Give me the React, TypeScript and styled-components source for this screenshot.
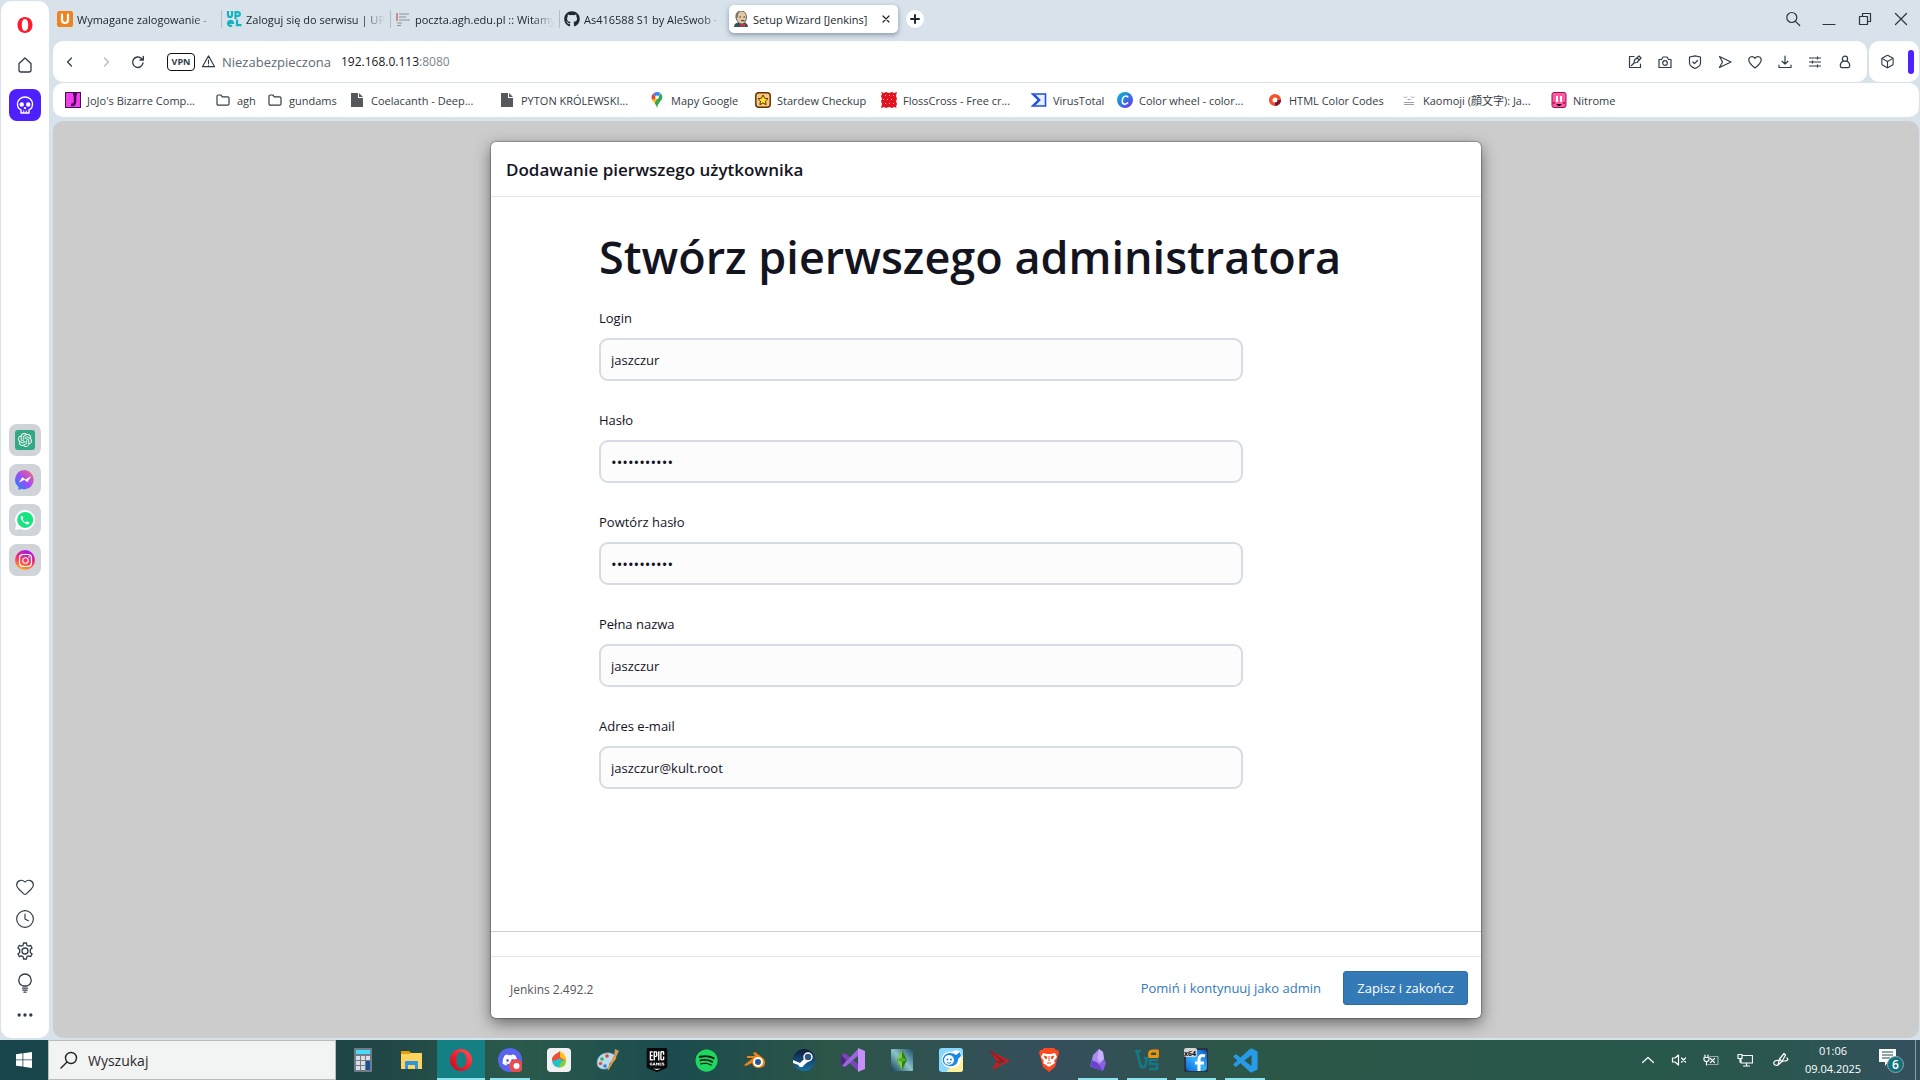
import React from "react";
import styled, { createGlobalStyle, css } from "styled-components";
import { Box, Clock4, Ellipsis, Heart } from "lucide-react";
import { FaGithub, FaDiscord, FaSpotify, FaInstagram } from "react-icons/fa";
import { SiEpicgames, SiOpenai } from "react-icons/si";
import { BiLogoVisualStudio } from "react-icons/bi";

const ui = `"Open Sans", "Noto Sans", "Noto Sans CJK JP", sans-serif`;

const Global = createGlobalStyle`
  *, *::before, *::after { box-sizing: border-box; }
  body { margin: 0; background: #d7e2eb; font-family: ${ui}; color: #14141f; }
  button, input { font: inherit; color: inherit; }
  button { border: 0; padding: 0; background: none; cursor: pointer; }
  svg { display: block; flex: none; }
`;

const Screen = styled.div`
  height: 100vh;
  min-height: 900px;
  display: grid;
  grid-template-rows: 1fr 40px;
`;

const Browser = styled.div`
  display: grid;
  grid-template-columns: 48px 1fr;
  gap: 4px;
  padding: 0 1px 2px 1px;
  min-height: 0;
`;

/* ---------- sidebar ---------- */

const Sidebar = styled.nav`
  background: #fff;
  border-radius: 10px;
  margin-top: 1px;
  padding: 8px 0 7px;
  display: flex;
  flex-direction: column;
  justify-content: space-between;
  align-items: center;
  color: #303c48;
`;

const SideGroup = styled.div<{ $gap: number }>`
  display: flex;
  flex-direction: column;
  align-items: center;
  gap: ${(p) => p.$gap}px;
`;

const SideButton = styled.button<{ $bg?: string }>`
  width: 32px;
  height: 32px;
  border-radius: 8px;
  display: grid;
  place-items: center;
  background: ${(p) => p.$bg || "transparent"};
`;

const SideMiddle = styled(SideGroup)`
  flex: 1;
  justify-content: center;
  padding-top: 8px;
`;

/* ---------- browser chrome ---------- */

const Main = styled.div`
  display: flex;
  flex-direction: column;
  min-width: 0;
`;

const TabStrip = styled.div`
  height: 41px;
  display: flex;
  align-items: center;
  padding-bottom: 3px;
  font-size: 11px;
  color: #20272e;
`;

const Tab = styled.button<{ $active?: boolean }>`
  width: 169px;
  height: 28px;
  display: flex;
  align-items: center;
  gap: 4px;
  padding: 0 6px 0 4px;
  text-align: left;
  ${(p) =>
    p.$active
      ? css`
          background: #fff;
          border-radius: 5px;
          box-shadow: 0 2px 5px rgba(60, 80, 100, 0.5);
        `
      : css`
          &:not(:nth-child(4)) {
            background: linear-gradient(#b3bdc6, #b3bdc6) right center / 1px 18px no-repeat;
          }
        `}
`;

const TabTitle = styled.span<{ $fade?: boolean }>`
  flex: 1;
  overflow: hidden;
  white-space: nowrap;
  ${(p) => p.$fade && "mask-image: linear-gradient(90deg, #000 84%, transparent);"}
`;

const NewTab = styled.button`
  width: 18px;
  height: 18px;
  margin-left: 8px;
  border-radius: 50%;
  background: #fff;
  display: grid;
  place-items: center;
`;

const WindowControls = styled.div`
  margin-left: auto;
  display: flex;
  color: #2b343d;
`;

const WinButton = styled.button`
  width: 36px;
  height: 28px;
  display: grid;
  place-items: center;
`;

const ToolbarRow = styled.div`
  display: grid;
  grid-template-columns: 1fr 50px;
  gap: 2px;
  height: 41px;
`;

const Panel = styled.div`
  background: #fff;
  border-radius: 10px;
  display: flex;
  align-items: center;
  color: #303c48;
`;

const Address = styled(Panel)`
  padding: 0 7px 0 0;
`;

const NavButton = styled.button<{ $w: number; $dim?: boolean }>`
  width: ${(p) => p.$w}px;
  height: 32px;
  display: grid;
  place-items: center;
  color: ${(p) => (p.$dim ? "#b5bac0" : "#303c48")};
`;

const Vpn = styled.button`
  width: 28px;
  height: 18px;
  margin: 0 6px 0 16px;
  border: 1px solid #111;
  border-radius: 4px;
  font-size: 9px;
  font-weight: 700;
  line-height: 16px;
`;

const Insecure = styled.span`
  margin-left: 6px;
  width: 119px;
  font-size: 13px;
  color: #606a74;
`;

const UrlBox = styled.span`
  flex: 1;
  font-size: 12px;
  color: #16191d;
  span { color: #7b858e; }
`;

const Extensions = styled(Panel)`
  justify-content: space-between;
  padding: 0 5px 0 8px;
`;

const Accent = styled.i`
  width: 6px;
  height: 24px;
  border-radius: 3px;
  background: #4e22ff;
`;

const Bookmarks = styled(Panel)`
  height: 34px;
  margin-top: 1px;
  padding-left: 12px;
  font-size: 11px;
  overflow: hidden;
`;

const Bookmark = styled.a<{ $w: number }>`
  width: ${(p) => p.$w}px;
  flex: none;
  display: flex;
  align-items: center;
  gap: 6px;
  color: #343c44;
  text-decoration: none;
  white-space: nowrap;
`;

/* ---------- page ---------- */

const Page = styled.main`
  flex: 1;
  min-height: 0;
  margin-top: 4px;
  background: #ccc;
  border-radius: 10px;
  padding: 21px 16px 20px;
  display: flex;
  justify-content: center;
  overflow: hidden;
`;

const Dialog = styled.form`
  width: 100%;
  max-width: 990px;
  background: #fff;
  border-radius: 5px;
  box-shadow: 0 0 1px 1px rgba(0, 0, 0, 0.25), 0 5px 16px rgba(0, 0, 0, 0.5);
  display: flex;
  flex-direction: column;
`;

const DialogHeader = styled.header`
  height: 55px;
  border-bottom: 1px solid #e5e5e5;
  padding: 0 15px;
  display: flex;
  align-items: center;
  font-size: 17px;
  font-weight: 600;
`;

const DialogBody = styled.section`
  flex: 1;
  padding: 32px 108px 0;
  border-bottom: 1px solid #ccc;
  margin-bottom: 24px;
`;

const Title = styled.h1`
  margin: 0 0 23px;
  font-size: 45px;
  line-height: 56px;
  font-weight: 600;
  white-space: nowrap;
`;

const Field = styled.div`
  display: flex;
  flex-direction: column;
  gap: 10px;
  max-width: 644px;
  margin-bottom: 29px;
  font-size: 13px;
  line-height: 20px;
`;

const TextInput = styled.input`
  height: 43px;
  border: 2px solid #d6dce6;
  border-radius: 9px;
  background: #fcfcfd;
  padding: 0 10px;
  outline: 0;
  line-height: 20px;
  &[type="password"] { font-size: 15px; }
`;

const DialogFooter = styled.footer`
  height: 62px;
  border-top: 1px solid #e5e5e5;
  padding: 0 13px 0 19px;
  display: flex;
  align-items: center;
  font-size: 13px;
`;

const Version = styled.span`
  flex: 1;
  color: #55585c;
  font-size: 12px;
  padding-top: 4px;
`;

const SkipLink = styled.a`
  color: #337ab7;
  text-decoration: none;
  margin-right: 22px;
`;

const Save = styled.button`
  height: 34px;
  width: 125px;
  border: 1px solid #2e6da4;
  border-radius: 3px;
  background: #337ab7;
  color: #fff;
`;

/* ---------- taskbar ---------- */

const Taskbar = styled.div`
  display: flex;
  align-items: stretch;
  color: #fff;
  background: linear-gradient(90deg, #17454b 0, #204646 20%, #2b5a4b 27%, #1b4b4f 35%, #2c5548 43%, #354e5c 55%, #2c5648 64%, #27574a 85%, #2b5650 93%, #33505e 100%);
`;

const Start = styled.button`
  width: 48px;
  display: grid;
  place-items: center;
`;

const TaskSearch = styled.label`
  width: 288px;
  background: #f2f3f3;
  border: 1px solid #b9bcbc;
  display: flex;
  align-items: center;
  gap: 10px;
  padding-left: 11px;
  color: #222;
  font-size: 14px;
  input {
    border: 0;
    outline: 0;
    background: none;
    width: 200px;
    padding: 0;
  }
  input::placeholder { color: #2b2b2b; opacity: 1; }
`;

const Tasks = styled.div`
  display: flex;
  gap: 1px;
  padding-left: 3px;
  flex: 1;
`;

const Task = styled.button<{ $open?: boolean; $active?: boolean }>`
  width: 48px;
  display: grid;
  place-items: center;
  background: ${(p) => (p.$active ? "#158084" : "transparent")};
  ${(p) =>
    p.$active
      ? "box-shadow: inset 0 -2px #8fe3ee;"
      : p.$open &&
        "background: linear-gradient(#8fe3ee, #8fe3ee) center bottom / 40px 2px no-repeat;"}
`;

const Tray = styled.div`
  display: flex;
  align-items: center;
  border-right: 1px solid #8b9ca2;
  margin-right: 4px;
`;

const TrayButton = styled.button<{ $w: number }>`
  width: ${(p) => p.$w}px;
  height: 40px;
  display: grid;
  place-items: center;
`;

const ClockText = styled.time`
  width: 66px;
  text-align: center;
  font-size: 11px;
  line-height: 18px;
`;

/* ---------- drawings ---------- */

type SvgProps = { s?: number; vb?: string; children: React.ReactNode; w?: number };
const Line = ({ s = 16, vb = "0 0 16 16", w = 1.2, children }: SvgProps) => (
  <svg width={s} height={s} viewBox={vb} fill="none" stroke="currentColor" strokeWidth={w} strokeLinecap="round" strokeLinejoin="round">{children}</svg>
);
const Art = ({ s = 24, vb = "0 0 24 24", children }: SvgProps) => (
  <svg width={s} height={s} viewBox={vb}>{children}</svg>
);

const OperaLogo = () => (
  <Art s={18} vb="0 0 18 18"><path fillRule="evenodd" fill="#ff1b2d" d="M9 1c4.600 0 7.500 3.600 7.500 8S13.600 17 9 17 1.500 13.400 1.500 9 4.400 1 9 1Zm0 2C6.800 3 5.800 6 5.800 9S6.800 15 9 15s3.200-3 3.200-6S11.200 3 9 3Z" /></Art>
);
const HomeIcon = () => <Line s={18} vb="0 0 18 18" w={1.3}><path d="M3 7.500 9 2l6 5.500V14a2 2 0 0 1-2 2H5a2 2 0 0 1-2-2Z" /></Line>;
const Skull = () => (
  <Art s={20} vb="0 0 20 20">
    <path d="M6 14.800C3.500 14 2.500 11.500 2.500 9 2.500 5 5.800 2 10 2s7.500 3 7.500 7c0 2.500-1 5-3.500 5.800V18H6Z" fill="none" stroke="#fff" strokeWidth="1.400" strokeLinejoin="round" />
    <circle cx="6.800" cy="9.500" r="2.200" fill="#fff" /><circle cx="13.200" cy="9.500" r="2.200" fill="#fff" />
    <path d="m10 12 .8 1.500H9.200ZM8.700 15.500V18M11.300 15.500V18" stroke="#fff" fill="#fff" />
  </Art>
);
const Gear = () => (
  <Line s={18} vb="0 0 18 18" w={1.3}>
    <path d="M7.500 1h3l.4 2.300 1.500.9 2.200-.8 1.500 2.600L14.300 7.500v3l1.800 1.500-1.500 2.600-2.200-.8-1.500.9-.4 2.300h-3l-.4-2.300-1.500-.9-2.200.8L1.900 12l1.800-1.500v-3L1.900 6l1.500-2.600 2.200.8 1.500-.9Z" /><circle cx="9" cy="9" r="3" />
  </Line>
);
const Bulb = () => <Line s={20} vb="0 0 20 20" w={1.3}><path d="M8 13C5.500 12 3.800 10 3.800 7.200a6.200 6.200 0 0 1 12.400 0c0 2.800-1.700 4.800-4.200 5.800ZM7.600 15.200h4.800M7.900 17.200h4.200M9 19.200h2" /></Line>;

const Upel = () => (
  <Art s={16} vb="0 0 16 16">
    <g fill="none" stroke="#14b5c0" strokeWidth="2.200"><path d="M2 0v4a2 2 0 0 0 4 0V0M9.500 8V1.200h2.500a1.800 1.800 0 0 1 0 3.800H9.500M2 12h5a2.500 2.500 0 1 0-1 2.400M11 8.500v5.700h4.500" /></g>
  </Art>
);
const Mail = () => (
  <Art s={16} vb="0 0 16 16"><path d="M1 2h2v8H1Z" fill="#d48a8a" /><path d="M4 3h10M4 6h7M4 9h11M2 12h5M2 14.500h4" stroke="#8b9299" strokeWidth="1.200" /></Art>
);
const JenkinsFace = () => (
  <Art s={16} vb="0 0 16 16">
    <path d="M1 16c0-3 2-4 4-4.500h6c2.500.5 4 2 4 4.500Z" fill="#335061" /><path d="M3 5c0-3 2-5 5-5s5.500 2 5.500 6-2 7-5 7S3 9 3 5Z" fill="#e3c6a5" stroke="#444" strokeWidth=".8" />
    <path d="M3 8C2 3 4 0 8 0 5.500 1.500 4.800 3 5 6Z" fill="#7a7672" /><path d="M6.500 6H8M10.500 6H12M8 9.700h3.500" stroke="#222" strokeWidth=".9" /><path d="m7 12.500 2 1 3-1V16l-3-1-2 1Z" fill="#d33833" />
  </Art>
);
const Folder = () => <Line><path d="M2 4.200A1.200 1.200 0 0 1 3.200 3h2.600l1.500 1.800h5.500A1.200 1.200 0 0 1 14 6v6a1.200 1.200 0 0 1-1.200 1.200H3.200A1.200 1.200 0 0 1 2 12Z" /></Line>;
const Doc = () => <Art s={16} vb="0 0 16 16"><path fill="#55585c" d="M2 1h7v5h5v9H2Zm8 0 4 4h-4Z" /></Art>;
const MapPin = () => (
  <Art s={16} vb="0 0 16 16"><path d="M8 0a5.300 5.300 0 0 0-4 1.800L8 6l3.500-4.800A5.300 5.300 0 0 0 8 0Z" fill="#4285f4" /><path d="M4 1.800A5.400 5.400 0 0 0 3.300 8L8 6Z" fill="#ea4335" /><path d="M3.300 8c.7 1.300 1.600 2 2.400 3.300L11 5 8 6Z" fill="#fbbc04" /><path d="M11.500 1.200A5.400 5.400 0 0 1 13 7c-1 2-4 4-5 9-.6-2-1.300-3.500-2.300-4.700Z" fill="#34a853" /><circle cx="8" cy="5.300" r="1.800" fill="#fff" /></Art>
);
const Star = () => <Art s={16} vb="0 0 16 16"><rect x=".8" y=".8" width="14.400" height="14.400" rx="3" fill="#f9c77c" stroke="#63330b" strokeWidth="1.500" /><path d="m8 3 1.600 3.200 3.400.5-2.500 2.400.6 3.600L8 11l-3.100 1.700.6-3.600L3 6.700l3.400-.5Z" fill="#ffe51f" stroke="#63330b" /></Art>;
const Floss = () => <Art s={16} vb="0 0 16 16"><path d="m0 0 3 1 2-1 3 1 3-1 2 1 3-1-1 4 1 3-1 2 1 3-1 3 1 1-3-1-2 1-3-1-3 1-2-1-3 1 1-4-1-3 1-2-1-3 1-2Z" fill="#e01320" /><g fill="#ffb3b3"><path d="M4 3h1v1H4zM8 3h1v1H8zM12 3h1v1h-1zM2 7h1v1H2zM6 7h1v1H6zM10 7h1v1h-1zM4 11h1v1H4zM8 11h1v1H8zM12 11h1v1h-1z" /></g></Art>;
const Virus = () => <Art s={16} vb="0 0 16 16"><path d="M1.500 2h13v12h-13l6-6Z" fill="#eaf0ff" stroke="#1c4fe0" strokeWidth="1.600" /><path d="m4 3 5 5-5 5" fill="none" stroke="#1c4fe0" strokeWidth="1.200" /></Art>;
const Canva = () => (
  <Art s={16} vb="0 0 16 16"><defs><linearGradient id="cv" x1="0" y1="0" x2="1" y2="1"><stop stopColor="#00c4cc" /><stop offset=".5" stopColor="#2f79e4" /><stop offset="1" stopColor="#7d2ae8" /></linearGradient></defs><circle cx="8" cy="8" r="8" fill="url(#cv)" /><path d="M11 5.500C10.500 3 6 3.500 5.300 8s3 5.500 5.700 2.500" fill="none" stroke="#fff" strokeWidth="1.500" /></Art>
);
const HtmlCodes = () => <Art s={16} vb="0 0 16 16"><circle cx="8" cy="8" r="4.300" fill="none" stroke="#f4522a" strokeWidth="3.600" /><path d="M12.300 8A4.300 4.300 0 0 1 8 12.300" fill="none" stroke="#7d1636" strokeWidth="3.600" /></Art>;
const Kao = () => <Art s={16} vb="0 0 16 16"><path d="M3 4.500 4.500 6M6 4.500 4.500 6M10 4.500 11.500 6M13 4.500 11.500 6M6.500 7.500h3M3 10.500h10M3 12.500h10" stroke="#9b9fa3" fill="none" /></Art>;
const Nitro = () => <Art s={16} vb="0 0 16 16"><rect x="1" y=".5" width="14" height="15" rx="2" fill="#ff58a5" stroke="#8f1750" /><path d="M5 4h2v6H5zM9 4h2v6H9z" fill="#fff" /><path d="M5 12h6l-2 2H7Z" fill="#220014" /><path d="M2 10h2v2H2zM12 10h2v2h-2z" fill="#d8133f" /></Art>;

const grad = (id: string, a: string, b: string, c = b) => (
  <defs><linearGradient id={id} x1="0" y1="1" x2="1" y2="0"><stop stopColor={a} /><stop offset=".5" stopColor={b} /><stop offset="1" stopColor={c} /></linearGradient></defs>
);
const Badge = styled.span<{ $bg: string; $r?: number; $c?: string; $s?: number }>`
  width: ${(p) => p.$s || 20}px;
  height: ${(p) => p.$s || 20}px;
  display: grid;
  place-items: center;
  flex: none;
  color: ${(p) => p.$c || "#fff"};
  background: ${(p) => p.$bg};
  border-radius: ${(p) => p.$r ?? 10}px;
`;
const Messenger = () => (
  <Art s={20} vb="0 0 20 20">{grad("ms", "#0a8cff", "#a04bf5", "#ff6a6a")}<path d="M10 0a9.700 9.700 0 0 1 0 19.300c-1.200 0-2.300-.2-3.300-.6L3.500 20v-3A9.700 9.700 0 0 1 10 0Z" fill="url(#ms)" /><path d="m4.500 12 3-4.500 3 2.300 5-3-3.200 5-3-2.300Z" fill="#fff" stroke="#fff" strokeLinejoin="round" strokeWidth=".6" /></Art>
);
const WhatsApp = () => (
  <Art s={20} vb="0 0 20 20"><path d="M10 0a10 10 0 1 1-4.500 18.900L0 20l1.200-5.400A10 10 0 0 1 10 0Z" fill="#fff" /><circle cx="10.200" cy="9.900" r="8" fill="#16e481" /><path d="M7 5.500c-1.500.7-1.600 2.200-1 3.500a10 10 0 0 0 5.500 5.200c1.500.5 2.700-.2 3-1.500l-2.600-1.400-1.100 1.200A8 8 0 0 1 7.500 9.200l1-1.100Z" fill="#fff" /></Art>
);

const Calc = () => <Art><rect x="3" width="18" height="24" rx="1" fill="#737b86" /><path d="M5 2h14v4H5Z" fill="#45dcf8" /><g fill="#d9dde4"><path d="M5 8h4v4H5zM10 8h4v4h-4zM15 8h4v4h-4zM5 13h4v4H5zM10 13h4v4h-4zM5 18h4v4H5zM10 18h4v4h-4z" /></g><path d="M15 13h4v9h-4z" fill="#174f9c" /></Art>;
const Explorer = () => <Art><path d="M1 3h8l2 2h10v3H1Z" fill="#e3a008" /><path d="M1 6h8l2-1h11v16H1Z" fill="#ffd35c" /><path d="M5 14q0-1 1-1h11q1 0 1 1v7h-3v-4H8v4H5Z" fill="#3095e0" /></Art>;
const OperaBig = () => <Art>{grad("op", "#b80c1c", "#ff1b2d", "#ff5a5a")}<path fillRule="evenodd" fill="url(#op)" d="M12 1a11 11 0 1 1 0 22 11 11 0 0 1 0-22Zm0 3C8.500 4 7.300 8 7.300 12S8.500 20 12 20s5.500-4 5.500-8S15.500 4 12 4Z" /></Art>;
const Discord = () => <Art><circle cx="12" cy="12" r="12" fill="#5865f2" /><FaDiscord x="4" y="4" size={16} color="#fff" /><circle cx="18" cy="18" r="7" fill="#e64c50" /><circle cx="18.500" cy="18" r="3" fill="#fff" /></Art>;
const Medi = () => <Art><rect width="24" height="24" rx="4" fill="#f1f1f1" /><circle cx="12" cy="12.500" r="7" fill="#22c3c8" /><path d="M5 12c0-5 5-6 8-9 0 3 5 4 6 9-3 3-5-3-8-1s-4 2-6 1Z" fill="#f34b35" /><path d="M12 19.500c5 0 7-3 7-8-3 1-6 3-7 8Z" fill="#8bd02e" /><path d="M13 9V3c4 2 6 5 6 9-2 0-4-1-6-3Z" fill="#ffc41c" /></Art>;
const Paint = () => <Art><path d="M1 15C1 8 7 4 14 5c5 1 7 4 5 7-2 2-4 1-5 3s0 3-2 5-11 2-11-5Z" fill="#b8dcee" stroke="#6999b4" strokeWidth=".6" /><circle cx="6" cy="11" r="1.800" fill="#3fae49" /><circle cx="11" cy="8" r="1.800" fill="#e74135" /><circle cx="4.500" cy="15.500" r="1.800" fill="#e2544c" /><circle cx="9" cy="18" r="1.800" fill="#3678d8" /><path d="m12 22 6-14 2 1Z" fill="#f09b35" stroke="#f09b35" /><path d="m18 8 1-7 4 2-3 6Z" fill="#d39a62" /></Art>;
const Epic = () => <Art><path d="M4 1h16v18l-8 4-8-4Z" fill="#fff" /><SiEpicgames x="0" y="0" size={24} color="#0a0a0a" /></Art>;
const Spotify = () => <Badge $bg="#0b2018" $c="#1ed760" $s={22} $r={11}><FaSpotify size={23} /></Badge>;
const Blender = () => <Art><path d="m1 17 9-7H4V8h8l-2-3 2-1 8 6c4 4 2 10-4 10-4 0-6-2-7-5l-6 3Z" fill="#ef8316" /><circle cx="15" cy="14" r="5" fill="#fff" /><circle cx="15" cy="14" r="3" fill="#265787" /></Art>;
const Steam = () => <Badge $bg="linear-gradient(#121a3c,#1573a8)" $s={22} $r={11}><Art s={22} vb="0 0 22 22"><path d="m0 11 7 3 5-5 4 3-5 4c-1 3-5 3-5.500 0L0 14Z" fill="#fff" /><circle cx="15" cy="8" r="4" fill="#31527c" stroke="#fff" strokeWidth="1.500" /></Art></Badge>;
const VStudio = () => <Art><path d="M0 7 4 5v14l-4-2Z" fill="#52218a" /><path d="M1 6.500 4 5l14 12v7L1 8Z" fill="#7a45b8" /><path d="M18 0v7L4 19l-3-1.500Z" fill="#9a66dc" /><path d="m17 0 7 3v18l-7 3Z" fill="#c490f7" /></Art>;
const Sims = () => <Art>{grad("si", "#123f5e", "#8cc4c8", "#1d4d6e")}<rect x="1" y="1" width="22" height="22" rx="1" fill="url(#si)" /><path d="M12 2 17 12 12 22 7 12Z" fill="#2f7d1e" /><path d="M12 2v20L7 12Z" fill="#7fcf45" /><path d="m7 12 5-3 5 3-5 2Z" fill="#4fae2c" /></Art>;
const Chat = () => (
  <Art><rect width="24" height="24" rx="3" fill="#8bd8ff" /><path d="M24 7v14q0 3-3 3H7Z" fill="#fff09a" />
    <path d="M3 10C4 5 8 3 13 4c2-2 8-2 9 1s0 12-4 14-11 1-13-2-3-4-2-7Z" fill="#fff" />
    <path d="M4 10C6 4 13 4 17 7l4-3 1 4-3 3c0 5-4 8-9 7s-7-4-6-8Z" fill="#1787e8" /><circle cx="10" cy="12" r="5" fill="#fff" /><circle cx="8.500" cy="11.500" r="1" fill="#1787e8" /><circle cx="12" cy="11.500" r="1" fill="#1787e8" /><path d="M8 14.500q2 1.500 4 0" fill="none" stroke="#1787e8" /></Art>
);
const RedArrow = () => <Art><path fillRule="evenodd" d="M2 3 22 13 4 22 9 13Zm6 5 4 5-3 5 9-5Z" fill="#d9161c" /><path d="m2 3 13 10-6 1" fill="none" stroke="#a90f14" strokeWidth="1.300" /></Art>;
const Brave = () => <Art><path d="M7 0h10l2 2h2l1 3-1 3-3 11-6 5-6-5L3 8 2 5l1-3h2Z" fill="#fb4a20" /><path d="m6 5 4 1h4l4-1 2 4-3 4 1 2-3 2-3 2-3-2-3-2 1-2-3-4Z" fill="#fff" /><path d="m7 8 3 1-1 2Zm10 0-3 1 1 2ZM12 8v5m-2 2h4" stroke="#fb4a20" fill="#fb4a20" /></Art>;
const Obsidian = () => <Art><path d="M13 1 17 4 18 11 20 15 17 23 11 21 4 18 7 8Z" fill="#8b62e5" /><path d="M13 1 11 10 14 15 11 21 4 18 6 12 7 7Z" fill="#a98af5" /><path d="M4 18 6 12 12 15 17 23 11 21Z" fill="#6d43cc" /><path d="M13 1 17 4 18 11 14 15 11 10Z" fill="#c7b1ff" /></Art>;
const VBox = () => <Art><path d="M0 3h6M2 3l4 16h4l2-9h-3M23 12h-8v4h7v5h-8" fill="none" stroke="#147887" strokeWidth="2.600" strokeLinejoin="round" /><path d="M14.500 8.500V6q0-3 3-3h5v5.500Z" fill="none" stroke="#ee930c" strokeWidth="2.800" strokeLinejoin="round" /></Art>;
const X64 = () => <Art>{grad("xf", "#0763dd", "#37b5fb", "#0a54c8")}<rect width="24" height="24" rx="1" fill="#2a3440" /><rect x="2" y="2" width="21" height="21" rx="4" fill="url(#xf)" /><path d="M21 8q-6-2-6 4v11m-4-8h9" fill="none" stroke="#fff" strokeWidth="3" /><rect width="13" height="9" rx="2" fill="#d5d5d5" /><text x="0" y="8" fontFamily="Open Sans, sans-serif" fontWeight="700" fontSize="7" fill="#111">x64</text></Art>;

/* ---------- data ---------- */

const tabs = [
  { title: "Wymagane zalogowanie - ", icon: <Badge $s={16} $r={2} $bg="#f08220"><Line w={2.2}><path d="M5 3.500V9a3 3 0 0 0 6 0V3.500" /></Line></Badge> },
  { title: "Zaloguj się do serwisu | UPeL", icon: <Upel /> },
  { title: "poczta.agh.edu.pl :: Witamy", icon: <Mail /> },
  { title: "As416588 S1 by AleSwob · ", icon: <FaGithub size={16} /> },
];

const bookmarks: [string, number, React.ReactNode][] = [
  ["JoJo's Bizarre Comp...", 150, <Art s={16} vb="0 0 16 16"><rect x=".5" y=".5" width="15" height="15" fill="#f23cf0" stroke="#44104a" /><path d="M10 2v8q0 3-4 3M8 2h4" stroke="#4b0752" strokeWidth="2.500" fill="none" /></Art>],
  ["agh", 52, <Folder />],
  ["gundams", 82, <Folder />],
  ["Coelacanth - Deep...", 150, <Doc />],
  ["PYTON KRÓLEWSKI...", 150, <Doc />],
  ["Mapy Google", 106, <MapPin />],
  ["Stardew Checkup", 126, <Star />],
  ["FlossCross - Free cr...", 150, <Floss />],
  ["VirusTotal", 86, <Virus />],
  ["Color wheel - color...", 150, <Canva />],
  ["HTML Color Codes", 134, <HtmlCodes />],
  ["Kaomoji (顔文字): Ja...", 150, <Kao />],
  ["Nitrome", 80, <Nitro />],
];

const fields = [
  { id: "login", label: "Login", value: "jaszczur", type: "text" },
  { id: "password", label: "Hasło", value: "jaszczur123", type: "password" },
  { id: "password2", label: "Powtórz hasło", value: "jaszczur123", type: "password" },
  { id: "fullname", label: "Pełna nazwa", value: "jaszczur", type: "text" },
  { id: "email", label: "Adres e-mail", value: "jaszczur@kult.root", type: "text" },
];

const tasks: { name: string; icon: React.ReactNode; open?: boolean; active?: boolean }[] = [
  { name: "Kalkulator", icon: <Calc /> },
  { name: "Eksplorator", icon: <Explorer /> },
  { name: "Opera", icon: <OperaBig />, active: true },
  { name: "Discord", icon: <Discord />, open: true },
  { name: "MediBang", icon: <Medi /> },
  { name: "Paint", icon: <Paint /> },
  { name: "Epic Games", icon: <Epic /> },
  { name: "Spotify", icon: <Spotify /> },
  { name: "Blender", icon: <Blender /> },
  { name: "Steam", icon: <Steam /> },
  { name: "Visual Studio", icon: <VStudio /> },
  { name: "The Sims", icon: <Sims /> },
  { name: "Chat", icon: <Chat /> },
  { name: "Strzałka", icon: <RedArrow /> },
  { name: "Brave", icon: <Brave /> },
  { name: "Obsidian", icon: <Obsidian />, open: true },
  { name: "VirtualBox", icon: <VBox />, open: true },
  { name: "x64", icon: <X64 />, open: true },
  { name: "VS Code", icon: <BiLogoVisualStudio size={29} color="#279be8" />, open: true },
];

const toolbarIcons: [string, React.ReactNode][] = [
  ["Edytuj", <Line><path d="M7 2.500H2.500v11h11V10M7 9l.5-3L12 2l2 2-4 4.500ZM10 3.800l2.200 2.200M4.500 11.500 7 9" /></Line>],
  ["Zrzut", <Line><path d="M2 5.500h2.500L6 3h4l1.500 2.500H14v8H2Z" /><circle cx="8" cy="9" r="2.300" /></Line>],
  ["Blokowanie", <Line><path d="M8 1.800 13.500 3v6c0 2.500-2.500 4.300-5.500 5.500C5 13.300 2.500 11.500 2.500 9V3ZM5.800 8l1.700 1.700L10.500 6.500" /></Line>],
  ["Wyślij", <Line><path d="M2.500 2.500 14 8 2.500 13.500 5.500 8Z" /></Line>],
  ["Ulubione", <Line><path d="M8 14C3.500 10.500 1.800 8.300 1.800 5.700 1.800 2.500 6 1.500 8 4.300c2-2.800 6.200-1.800 6.200 1.400C14.200 8.300 12.500 10.500 8 14Z" /></Line>],
  ["Pobrane", <Line><path d="M8 2v8M5 7.300 8 10l3-2.700M2 11v2.500h12V11" /></Line>],
  ["Ustawienia", <Line><path d="M2 4h12M2 8h12M2 12h12M10.500 2.500v3M5.500 6.500v3M10.500 10.500v3" strokeLinecap="butt" /></Line>],
  ["Profil", <Line><circle cx="8" cy="4.800" r="2.600" /><path d="M6 7.200c-2 1-2.700 2.300-2.700 4.300 0 1.500.7 2.200 1.700 2.200h6c1 0 1.700-.7 1.700-2.200 0-2-.7-3.300-2.700-4.300" /></Line>],
];

export default function App() {
  return (
    <>
      <Global />
      <Screen>
        <Browser>
          <Sidebar>
            <SideGroup $gap={8}>
              <SideButton aria-label="Opera"><OperaLogo /></SideButton>
              <SideButton aria-label="Start"><HomeIcon /></SideButton>
              <SideButton aria-label="Obszar roboczy" $bg="#4f20ff"><Skull /></SideButton>
            </SideGroup>
            <SideMiddle $gap={8}>
              <SideButton aria-label="ChatGPT" $bg="#d0d3d7"><Badge $bg="#34a784" $r={3}><SiOpenai size={14} /></Badge></SideButton>
              <SideButton aria-label="Messenger" $bg="#d0d3d7"><Messenger /></SideButton>
              <SideButton aria-label="WhatsApp" $bg="#d0d3d7"><WhatsApp /></SideButton>
              <SideButton aria-label="Instagram" $bg="#d0d3d7">
                <Badge $bg="linear-gradient(20deg,#ffb31f 8%,#fb3a5d 45%,#a414ef 90%)"><FaInstagram size={15} /></Badge>
              </SideButton>
            </SideMiddle>
            <SideGroup $gap={0}>
              <SideButton aria-label="Ulubione"><Heart size={20} strokeWidth={1.4} /></SideButton>
              <SideButton aria-label="Historia"><Clock4 size={20} strokeWidth={1.4} /></SideButton>
              <SideButton aria-label="Ustawienia"><Gear /></SideButton>
              <SideButton aria-label="Porady"><Bulb /></SideButton>
              <SideButton aria-label="Więcej"><Ellipsis size={20} strokeWidth={2} /></SideButton>
            </SideGroup>
          </Sidebar>

          <Main>
            <TabStrip>
              {tabs.map((t) => (
                <Tab key={t.title}>{t.icon}<TabTitle $fade>{t.title}</TabTitle></Tab>
              ))}
              <Tab $active>
                <JenkinsFace /><TabTitle>Setup Wizard [Jenkins]</TabTitle>
                <Line s={12} vb="0 0 12 12"><path d="m3 3 6 6M9 3 3 9" /></Line>
              </Tab>
              <NewTab aria-label="Nowa karta"><Line s={12} vb="0 0 12 12" w={2}><path d="M6 2v8M2 6h8" /></Line></NewTab>
              <WindowControls>
                <WinButton aria-label="Szukaj"><Line><circle cx="6.800" cy="6.500" r="5" /><path d="m10.500 10.300 4.200 4.200" /></Line></WinButton>
                <WinButton aria-label="Minimalizuj"><Line><path d="M2 13.500h12" /></Line></WinButton>
                <WinButton aria-label="Przywróć"><Line><path d="M2.500 5.500h8v8h-8ZM5.500 5.500v-3h8v8h-3" /></Line></WinButton>
                <WinButton aria-label="Zamknij"><Line><path d="m2.500 2.500 11 11M13.500 2.500l-11 11" /></Line></WinButton>
              </WindowControls>
            </TabStrip>

            <ToolbarRow>
              <Address>
                <NavButton $w={34} aria-label="Wstecz"><Line><path d="M9.500 4 5.500 8l4 4" /></Line></NavButton>
                <NavButton $w={38} $dim aria-label="Dalej"><Line><path d="m6.500 4 4 4-4 4" /></Line></NavButton>
                <NavButton $w={26} aria-label="Odśwież"><Line w={1.4}><path d="M13 9a5.200 5.200 0 1 1-1.500-4.500L13 6M13.300 2.500V6H10" /></Line></NavButton>
                <Vpn>VPN</Vpn>
                <Line s={15}><path d="M8 2 1.500 13.500h13ZM8 6.500v3.500M8 11.800v.2" /></Line>
                <Insecure>Niezabezpieczona</Insecure>
                <UrlBox>192.168.0.113<span>:8080</span></UrlBox>
                {toolbarIcons.map(([name, icon]) => (
                  <NavButton key={name} $w={30} aria-label={name}>{icon}</NavButton>
                ))}
              </Address>
              <Extensions>
                <NavButton $w={20} aria-label="Rozszerzenia"><Box size={15} strokeWidth={1.8} /></NavButton>
                <Accent />
              </Extensions>
            </ToolbarRow>

            <Bookmarks as="nav">
              {bookmarks.map(([name, w, icon]) => (
                <Bookmark key={name} href="#" $w={w}>{icon}{name}</Bookmark>
              ))}
            </Bookmarks>

            <Page>
              <Dialog onSubmit={(e) => e.preventDefault()}>
                <DialogHeader>Dodawanie pierwszego użytkownika</DialogHeader>
                <DialogBody>
                  <Title>Stwórz pierwszego administratora</Title>
                  {fields.map((f) => (
                    <Field key={f.id}>
                      <label htmlFor={f.id}>{f.label}</label>
                      <TextInput id={f.id} type={f.type} defaultValue={f.value} />
                    </Field>
                  ))}
                </DialogBody>
                <DialogFooter>
                  <Version>Jenkins 2.492.2</Version>
                  <SkipLink href="#">Pomiń i kontynuuj jako admin</SkipLink>
                  <Save type="submit">Zapisz i zakończ</Save>
                </DialogFooter>
              </Dialog>
            </Page>
          </Main>
        </Browser>

        <Taskbar>
          <Start aria-label="Start"><Art s={16} vb="0 0 16 16"><path fill="#fff" d="M0 2.200 6.500 1.300v6.200H0Zm7.300-1L16 0v7.500H7.300ZM0 8.300h6.500v6.300L0 13.700Zm7.300 0H16V16l-8.700-1.200Z" /></Art></Start>
          <TaskSearch>
            <Line s={18} vb="0 0 18 18" w={1.4}><circle cx="11" cy="7" r="5.500" /><path d="M7 11 1 17" /></Line>
            <input placeholder="Wyszukaj" aria-label="Wyszukaj" />
          </TaskSearch>
          <Tasks>
            {tasks.map((t) => (
              <Task key={t.name} aria-label={t.name} $open={t.open} $active={t.active}>{t.icon}</Task>
            ))}
          </Tasks>
          <Tray>
            <TrayButton $w={30} aria-label="Ukryte ikony"><Line><path d="m2.500 10.500 5.500-5 5.500 5" /></Line></TrayButton>
            <TrayButton $w={32} aria-label="Głośność"><Line><path d="M1.500 6v4H4l3.500 3V3L4 6ZM10.500 6l4 4M14.500 6l-4 4" /></Line></TrayButton>
            <TrayButton $w={32} aria-label="Bateria"><Line><path d="M2 3v2M5 3v2M1 5.500h5V8L4.500 9.500h-2L1 8ZM3.500 9.500V13M7.500 6.500l4 4M11.500 6.500l-4 4" /><path d="M7 4.500h8v8H5" opacity=".5" /></Line></TrayButton>
            <TrayButton $w={35} aria-label="Sieć"><Line><path d="M6 3.500h9.500v7.500H4V7M9.500 11v3M6.500 14h6M1 2.500h4v4H1ZM3 6.500V10" /></Line></TrayButton>
            <TrayButton $w={38} aria-label="Pióro"><Line><path d="M5 13 6.500 7 11 1.500 12.500 3 9 9.500Zm1.500-6L9 9.500M5 8.500C1 8 .5 11 1 12s3 2 4 1 3-4 6-4 5-1 3-3" /></Line></TrayButton>
            <ClockText>01:06<br />09.04.2025</ClockText>
            <TrayButton $w={49} aria-label="Powiadomienia">
              <Art s={26} vb="0 0 26 26"><path d="M1 2h17v13H10l-3 4v-4H1Z" fill="#fff" /><path d="M4 5h11M4 8h11M4 11h8" stroke="#234b4b" /><circle cx="17.500" cy="17.500" r="8" fill="#11727b" stroke="#8fa7aa" /><text x="17.500" y="22" textAnchor="middle" fontFamily="Open Sans, sans-serif" fontWeight="600" fontSize="12" fill="#fff">6</text></Art>
            </TrayButton>
          </Tray>
        </Taskbar>
      </Screen>
    </>
  );
}
